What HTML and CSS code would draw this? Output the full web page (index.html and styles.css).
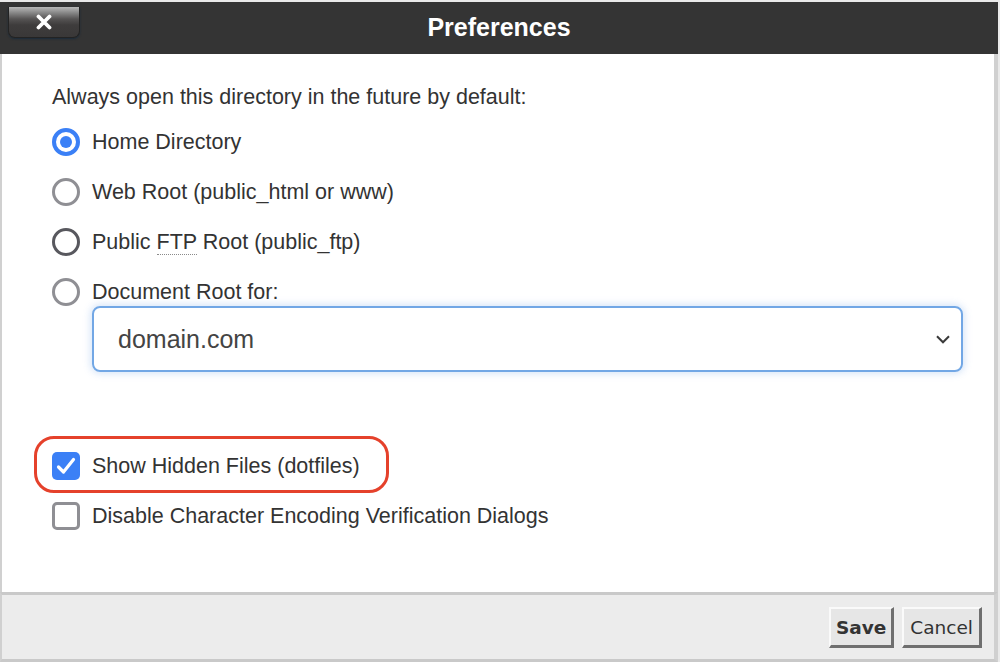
FILE: index.html
```html
<!DOCTYPE html>
<html lang="en">
<head>
<meta charset="utf-8">
<title>Preferences</title>
<link rel="stylesheet" href="styles.css">
</head>
<body>
<div class="dialog">
  <header class="titlebar">
    <button class="close" type="button" aria-label="Close">
      <svg width="18" height="16" viewBox="0 0 18 16"><path d="M3.5 2.5 L14.5 13.5 M14.5 2.5 L3.5 13.5" stroke="#fff" stroke-width="3.8" stroke-linecap="round" fill="none"/></svg>
    </button>
    <h1 class="title">Preferences</h1>
  </header>
  <main class="content">
    <p class="intro">Always open this directory in the future by default:</p>
    <div class="options">
      <label class="opt"><span class="radio radio-on"></span><span>Home Directory</span></label>
      <label class="opt"><span class="radio"></span><span>Web Root (public_html or www)</span></label>
      <label class="opt"><span class="radio radio-hover"></span><span>Public <abbr class="abbr" title="File Transfer Protocol">FTP</abbr> Root (public_ftp)</span></label>
      <label class="opt"><span class="radio"></span><span>Document Root for:</span></label>
    </div>
    <div class="select">
      <span class="select-value">domain.com</span>
      <svg class="chevron" width="14" height="9" viewBox="0 0 14 9"><path d="M1 1.2 L7 7.3 L13 1.2" stroke="#3a3a3a" stroke-width="2" fill="none"/></svg>
    </div>
    <div class="checks">
      <label class="opt opt-highlight"><span class="check check-on"><svg width="28" height="28" viewBox="0 0 28 28"><path d="M6.5 15 L11.5 20 L21.5 7.5" stroke="#fff" stroke-width="3.2" stroke-linecap="round" stroke-linejoin="round" fill="none"/></svg></span><span>Show Hidden Files (dotfiles)</span></label>
      <label class="opt"><span class="check"></span><span>Disable Character Encoding Verification Dialogs</span></label>
    </div>
  </main>
  <footer class="actions">
    <button class="btn btn-primary" type="button">Save</button>
    <button class="btn" type="button">Cancel</button>
  </footer>
</div>
</body>
</html>
```

FILE: styles.css
```css
html {
  background: #e9e9e9;
}
body {
  margin: 0;
  font-family: "Liberation Sans", Arial, sans-serif;
  color: #333;
}
.dialog {
  width: 998px;
  margin-top: 2px;
}
.titlebar {
  height: 52px;
  background: #343434;
  display: grid;
  grid-template-columns: 1fr auto 1fr;
  align-items: center;
}
.close {
  justify-self: start;
  align-self: start;
  margin: 5px 0 0 8px;
  width: 72px;
  height: 31px;
  padding: 0;
  border: 1px solid #232323;
  border-top: none;
  border-radius: 0 0 7px 7px;
  background: linear-gradient(#b8b8b8 0%, #8a8a8a 18%, #555353 40%, #3e3c3c 60%, #3a3838 100%);
  box-shadow: 0 1px 2px rgba(20, 40, 60, 0.8);
  display: flex;
  align-items: center;
  justify-content: center;
}
.close svg {
  display: block;
}
.title {
  margin: 0;
  padding-bottom: 3px;
  font-size: 25px;
  font-weight: bold;
  color: #fff;
  line-height: 46px;
}
.content {
  height: 538px;
  box-sizing: border-box;
  background: #fff;
  border-left: 2px solid #d0d0d0;
  border-right: 4px solid #d0d0d0;
  padding: 30px 31px 0 50px;
  font-size: 21.5px;
}
.intro {
  margin: 0 0 18px;
  line-height: 26px;
}
.options {
  display: flex;
  flex-direction: column;
  gap: 22px;
}
.opt {
  display: flex;
  align-items: center;
  gap: 12px;
  height: 28px;
  line-height: 26px;
}
.radio {
  width: 28px;
  height: 28px;
  box-sizing: border-box;
  border-radius: 50%;
  border: 3.5px solid #8f8f94;
  background: #fff;
  flex: none;
  display: flex;
  align-items: center;
  justify-content: center;
}
.radio-hover {
  border-color: #58585e;
}
.radio-on {
  border: 4px solid #3b80f6;
}
.radio-on::after {
  content: "";
  width: 12px;
  height: 12px;
  border-radius: 50%;
  background: #3b80f6;
}
.abbr {
  text-decoration: none;
  border-bottom: 1.5px dotted #8a8a8a;
}
.select {
  margin-left: 40px;
  height: 66px;
  box-sizing: border-box;
  border: 2px solid #72a7e5;
  border-radius: 8px;
  box-shadow: 0 0 7px 2px rgba(114, 167, 229, 0.28);
  display: flex;
  align-items: center;
  justify-content: space-between;
  padding: 0 11px 0 24px;
}
.select-value {
  font-size: 25px;
  color: #444;
}
.chevron {
  display: block;
}
.checks {
  margin-top: 80px;
  display: flex;
  flex-direction: column;
  gap: 22px;
}
.opt-highlight {
  position: relative;
  align-self: flex-start;
}
.opt-highlight::after {
  content: "";
  position: absolute;
  left: -18px;
  right: -29px;
  top: -16px;
  bottom: -13px;
  border: 3px solid #e5412b;
  border-radius: 20px;
}
.check {
  width: 28px;
  height: 28px;
  box-sizing: border-box;
  border: 3.5px solid #8f8f94;
  border-radius: 5px;
  background: #fff;
  flex: none;
}
.check-on {
  border: none;
  background: #3b80f6;
}
.check-on svg {
  display: block;
}
.actions {
  height: 64px;
  background: #ececec;
  border-top: 3px solid #c9c9c9;
  border-bottom: 3px solid #c9c9c9;
  border-left: 2px solid #d0d0d0;
  border-right: 4px solid #d0d0d0;
  display: flex;
  justify-content: flex-end;
  align-items: center;
  gap: 8px;
  padding-right: 12px;
}
.btn {
  height: 41px;
  box-sizing: border-box;
  background: #e6e6e6;
  border-style: solid;
  border-width: 2px 3px 3px 2px;
  border-color: #fafafa #6f6f6f #6f6f6f #fafafa;
  font-family: "DejaVu Sans", Verdana, sans-serif;
  font-size: 18.5px;
  color: #333;
  padding: 0 6px;
  margin-top: 1px;
}
.btn-primary {
  font-weight: bold;
  padding: 0 5px;
}
```
